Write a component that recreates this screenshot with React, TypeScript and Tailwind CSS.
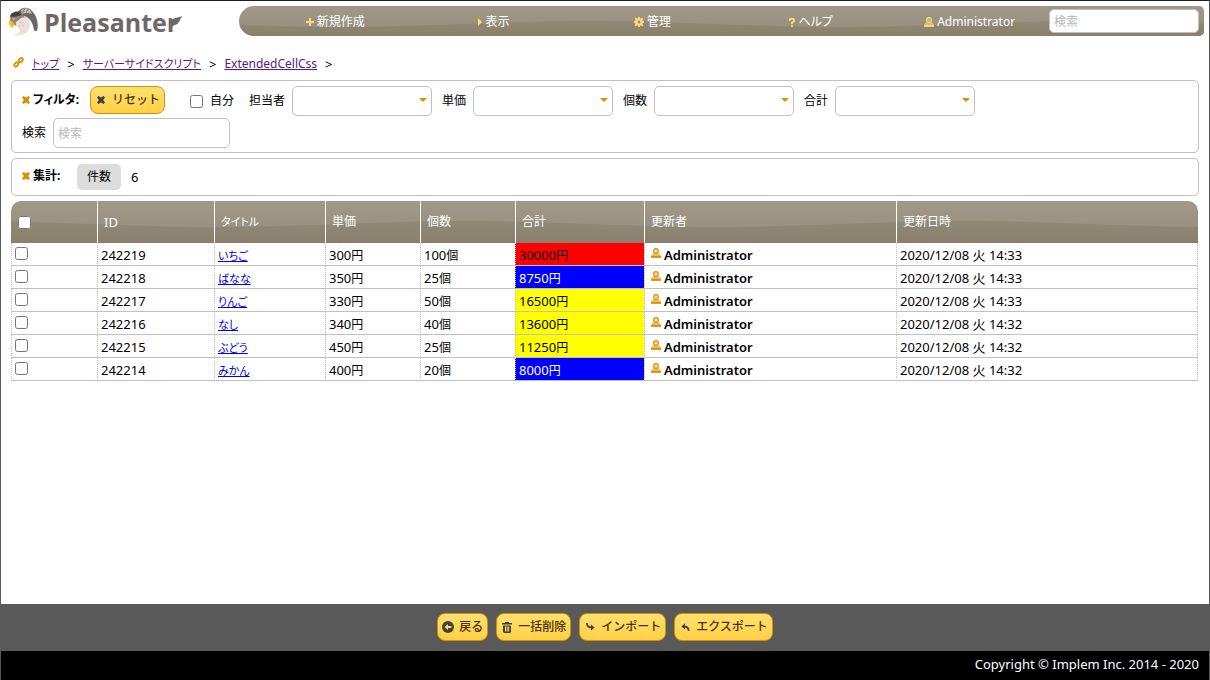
import React from 'react';

type IconProps = { className?: string };

const navItems = [
  { label: '新規作成', icon: 'plus' },
  { label: '表示', icon: 'caret' },
  { label: '管理', icon: 'gear' },
  { label: 'ヘルプ', icon: 'help' },
  { label: 'Administrator', icon: 'person' },
];

const columns = [
  { label: 'ID', css: 'w-[117px]' },
  { label: 'タイトル', css: 'w-[111px] text-[11px]' },
  { label: '単価', css: 'w-[95px] text-[12px]' },
  { label: '個数', css: 'w-[95px] text-[12px]' },
  { label: '合計', css: 'w-[129px] text-[12px]' },
  { label: '更新者', css: 'w-[252px] text-[12px]' },
  { label: '更新日時', css: 'w-[302px] text-[12px]' },
];

const rows = [
  { id: '242219', title: 'いちご', price: '300', count: '100', total: '30000', css: 'bg-[#ff0000]', time: '14:33' },
  { id: '242218', title: 'ばなな', price: '350', count: '25', total: '8750', css: 'bg-[#0000ff] text-white', time: '14:33' },
  { id: '242217', title: 'りんご', price: '330', count: '50', total: '16500', css: 'bg-[#ffff00]', time: '14:33' },
  { id: '242216', title: 'なし', price: '340', count: '40', total: '13600', css: 'bg-[#ffff00]', time: '14:32' },
  { id: '242215', title: 'ぶどう', price: '450', count: '25', total: '11250', css: 'bg-[#ffff00]', time: '14:32' },
  { id: '242214', title: 'みかん', price: '400', count: '20', total: '8000', css: 'bg-[#0000ff] text-white', time: '14:32' },
];

const PersonIcon: React.FC<IconProps> = ({ className }) => (
  <svg viewBox="0 0 10 10" className={className} width="10" height="10" fill="currentColor" aria-hidden="true">
    <circle cx="5" cy="3" r="2.4" fillOpacity="0.35" stroke="currentColor" strokeWidth="1.1" />
    <path d="M2.4 5.2 L7.6 5.2 L9.4 6.6 L10 9.6 L0 9.6 L0.6 6.6 Z" fillOpacity="0.6" />
    <rect x="0" y="8" width="10" height="1.8" />
  </svg>
);

const CloseIcon: React.FC<IconProps> = ({ className }) => (
  <svg viewBox="0 0 8 8" className={className} width="8" height="8" fill="currentColor" aria-hidden="true">
    <path d="M0 1.5 L1.5 0 L4 1.6 L6.5 0 L8 1.5 L6.2 4 L8 6.5 L6.5 8 L4 6.4 L1.5 8 L0 6.5 L1.8 4 Z" />
  </svg>
);

const MenuIcon: React.FC<{ name: string }> = ({ name }) => {
  if (name === 'person') return <PersonIcon />;
  if (name === 'plus') {
    return (
      <svg viewBox="0 0 8 8" width="8" height="8" fill="currentColor" aria-hidden="true">
        <path d="M3 0h2v3h3v2H5v3H3V5H0V3h3z" />
      </svg>
    );
  }
  if (name === 'caret') {
    return (
      <svg viewBox="0 0 4 8" width="4" height="8" fill="currentColor" aria-hidden="true">
        <path d="M0 0l4 4-4 4z" />
      </svg>
    );
  }
  if (name === 'gear') {
    return (
      <svg viewBox="0 0 10 10" width="10" height="10" fill="none" stroke="currentColor" aria-hidden="true">
        <circle cx="5" cy="5" r="2.6" strokeWidth="2.4" />
        <path d="M5 0v2M5 8v2M0 5h2M8 5h2M1.2 1.2l1.6 1.6M7.2 7.2l1.6 1.6M8.8 1.2L7.2 2.8M2.8 7.2L1.2 8.8" strokeWidth="1.8" />
      </svg>
    );
  }
  return (
    <svg viewBox="0 0 6 9" width="6" height="9" fill="none" stroke="currentColor" strokeWidth="1.8" aria-hidden="true">
      <path d="M0.5 2.8V1.6L1.4 0.9H4.2L5 1.7V3.2L3 4.6V6.2M3 7.2V9" />
    </svg>
  );
};

const Wave: React.FC<{ id: string; height: number; shift: number; level: number }> = ({ id, height, shift, level }) => {
  const top = level - 3;
  const bottom = level + 3;
  return (
    <svg className="absolute inset-0 -z-10 h-full w-full" aria-hidden="true">
      <defs>
        <linearGradient id={`${id}-light`} x1="0" y1="0" x2="0" y2="1">
          <stop offset="0" stopColor="#a19889" />
          <stop offset="1" stopColor="#958c7b" />
        </linearGradient>
        <linearGradient id={`${id}-dark`} x1="0" y1="0" x2="0" y2="1">
          <stop offset="0" stopColor="#918875" />
          <stop offset="1" stopColor="#8a7f6d" />
        </linearGradient>
        <pattern id={`${id}-tile`} x={shift} width="500" height={height} patternUnits="userSpaceOnUse">
          <path
            d={`M0 ${bottom} C90 ${bottom} 160 ${top} 250 ${top} S410 ${bottom} 500 ${bottom} V${height} H0 Z`}
            fill={`url(#${id}-dark)`}
          />
        </pattern>
      </defs>
      <rect width="100%" height="100%" fill={`url(#${id}-light)`} />
      <rect width="100%" height="100%" fill={`url(#${id}-tile)`} />
    </svg>
  );
};

const Logo: React.FC = () => (
  <a href="#" className="flex h-8 w-[178px] items-center text-[#6f6668]" aria-label="Pleasanter">
    <svg viewBox="0 0 30 30" width="30" height="30" aria-hidden="true">
      <path d="M10 5 C13 0 20 -1 24 4 C29 9 31 17 29 24 C28 24 27 24 26 23 C25 16 22 10 15 9 L10 9 Z" fill="#6f6668" />
      <path d="M13 3.5 C15 1 19 0.5 22 3 L24 7 C21 5.5 17 5.5 14 7 Z" fill="#c5bbb7" />
      <path d="M15 6 C14.5 4 15.5 2.8 17 2.4 M18.5 5.6 C18 4 19 3 20.5 2.8" fill="none" stroke="#5b5254" strokeWidth="0.8" />
      <path d="M2 9 C3 5.5 7 4 11 4.5 L13 8 L9 10 L2.5 10.5 Z" fill="#454043" />
      <path d="M2.5 10 L9 9.5 L15 8 L17 11 L10 15 L8 19 L2 14 Z" fill="#8b8281" />
      <path d="M8 15 L14 10.5 C19 10 23 13 22 19 C21 26 14 30.5 3 27.5 C9 28 13 26 11.5 22.5 C10 20 7 19 8 15 Z" fill="#ecdfd8" />
      <path d="M12 15 l1.2 1 M14.5 18 l1.2 1 M11 19 l1 0.8" stroke="#a99c97" strokeWidth="0.8" />
      <path d="M1 14 L5 14.5 L6 17.5 L5 21 C2.5 19.5 0 17 1 14 Z" fill="#f3c300" />
      <circle cx="6" cy="12" r="1.1" fill="#f3c300" />
    </svg>
    <span className="relative ml-[6px] font-['Open_Sans',sans-serif] text-[25px] font-bold leading-8">
      Pleasanter
      <svg viewBox="0 0 12 12" width="12" height="12" className="absolute -right-1 top-[10px]" fill="currentColor" aria-hidden="true">
        <path d="M0 5 C3 2 7 2 12 0 C11.5 2 10.5 3 9.5 3.6 L10.6 3.8 C9.8 5.4 8.8 6 7.8 6.4 L8.8 6.8 C7 9 4 8.6 2.6 10.4 L1 12 Z" />
      </svg>
    </span>
  </a>
);

const Breadcrumb: React.FC = () => (
  <nav className="flex h-5 items-center gap-2 px-3" aria-label="breadcrumb">
    <svg viewBox="0 0 12 12" width="11" height="11" className="mb-1" fill="none" stroke="#d49200" strokeWidth="2" aria-hidden="true">
      <ellipse cx="8.4" cy="3.4" rx="2.6" ry="1.8" transform="rotate(-45 8.4 3.4)" />
      <ellipse cx="3.6" cy="8.2" rx="2.6" ry="1.8" transform="rotate(-45 3.6 8.2)" />
    </svg>
    <a href="#" className="text-[11px] text-[#551a8b] underline">トップ</a>
    <span>&gt;</span>
    <a href="#" className="text-[11px] text-[#551a8b] underline">サーバーサイドスクリプト</a>
    <span>&gt;</span>
    <a href="#" className="text-[12px] text-[#551a8b] underline">ExtendedCellCss</a>
    <span>&gt;</span>
  </nav>
);

const FilterSelect: React.FC<{ id: string; label: string }> = ({ id, label }) => (
  <div className="flex items-center gap-[7px]">
    <label htmlFor={id} className="text-[12px]">{label}</label>
    <div className="relative">
      <select id={id} className="block h-[30px] w-[140px] appearance-none rounded-[5px] border border-[#c0c0c0] bg-white px-1">
        <option value=""></option>
      </select>
      <svg viewBox="0 0 8 4" width="8" height="4" className="pointer-events-none absolute right-[5px] top-3" fill="#d49200" aria-hidden="true">
        <path d="M0 0h8L4 4z" />
      </svg>
    </div>
  </div>
);

const CommandButton: React.FC<{ label: string; children: React.ReactNode }> = ({ label, children }) => (
  <button
    type="button"
    className="flex h-7 items-center gap-[5px] rounded-lg border border-[#d49200] bg-linear-to-b from-[#ffdf70] via-[#ffd95c] to-[#ffd040] px-1 text-[12px] font-medium text-[#4c3000] [font-feature-settings:normal]"
  >
    <span className="flex w-3 justify-center">{children}</span>
    {label}
  </button>
);

const App: React.FC = () => {
  return (
    <div className="flex min-h-screen flex-col border-x border-t border-x-[#5a5a5a] border-t-[#201c20] bg-white font-['Noto_Sans','Noto_Sans_CJK_JP',sans-serif] text-[13px] leading-5 text-black [font-feature-settings:'palt']">
      <header className="flex items-start justify-between gap-[53px] pl-[7px] pr-[5px] pt-[5px]">
        <Logo />
        <nav className="relative isolate flex h-[30px] flex-1 items-center overflow-hidden rounded-l-[15px] rounded-r-[5px] pl-[17px] pr-[5px] text-white">
          <Wave id="nav" height={30} shift={100} level={18} />
          <ul className="flex flex-1 pt-[2px]">
            {navItems.map((item) => (
              <li key={item.label} className="flex-1">
                <a href="#" className="flex items-center justify-center gap-[3px] text-[12px] text-[#ffdb70]">
                  <MenuIcon name={item.icon} />
                  <span className="text-white">{item.label}</span>
                </a>
              </li>
            ))}
          </ul>
          <input
            type="text"
            aria-label="検索"
            placeholder="検索"
            className="h-6 w-[150px] rounded-[5px] border border-[#c0c0c0] bg-white px-1 text-[12px] text-black placeholder:text-[#b8b8b8]"
          />
        </nav>
      </header>

      <main className="flex-1">
        <div className="pb-[6px] pt-4">
          <Breadcrumb />
        </div>
        <div className="flex flex-col gap-[5px] px-[10px]">
          <section className="rounded-[5px] border border-[#c0c0c0] px-[10px] pb-1 pt-[5px]">
            <div className="flex flex-wrap items-center gap-x-[10px]">
              <div className="flex h-7 w-[58px] items-center gap-[3px] self-start text-[12px] font-bold">
                <CloseIcon className="text-[#d49200]" />
                フィルタ:
              </div>
              <div className="self-start">
                <CommandButton label="リセット">
                  <CloseIcon className="text-[#404040]" />
                </CommandButton>
              </div>
              <label className="ml-[15px] mr-[5px] flex items-center gap-[7px] text-[12px]">
                <input type="checkbox" className="size-[13px]" />
                自分
              </label>
              <FilterSelect id="owner" label="担当者" />
              <FilterSelect id="price" label="単価" />
              <FilterSelect id="count" label="個数" />
              <FilterSelect id="total" label="合計" />
            </div>
            <div className="mt-[2px] flex items-center gap-[7px]">
              <label htmlFor="search" className="text-[12px]">検索</label>
              <input
                id="search"
                type="text"
                placeholder="検索"
                className="h-[30px] w-[177px] rounded-[5px] border border-[#c0c0c0] px-1 text-[12px] placeholder:text-[#b8b8b8]"
              />
            </div>
          </section>

          <section className="flex items-center rounded-[5px] border border-[#c0c0c0] px-[10px] py-[5px]">
            <div className="flex w-[55px] items-center gap-[3px] pb-[2px] text-[12px] font-bold">
              <CloseIcon className="text-[#d49200]" />
              集計:
            </div>
            <span className="flex h-[26px] items-center rounded-[5px] bg-[#dcdcdc] px-[10px] text-[12px]">件数</span>
            <span className="ml-[10px]">6</span>
          </section>

          <div className="relative isolate mr-px">
            <div className="absolute inset-x-0 top-0 -z-10 h-[42px] overflow-hidden rounded-t-[10px]">
              <Wave id="grid" height={42} shift={204} level={23} />
            </div>
            <table className="w-full table-fixed border-separate border-spacing-0">
              <thead>
                <tr className="h-[42px] text-left text-white">
                  <th className="w-[86px] px-[7px] font-normal">
                    <input type="checkbox" aria-label="すべて選択" className="block size-[13px]" />
                  </th>
                  {columns.map((column) => (
                    <th key={column.label} className={`${column.css} border-l border-white px-[6px] font-normal`}>
                      {column.label}
                    </th>
                  ))}
                </tr>
              </thead>
              <tbody className="leading-[18px] [&_td]:h-[23px] [&_td]:border-b [&_td]:border-l [&_td]:border-[#c0c0c0] [&_td]:px-[3px] [&_td]:pt-[2px] [&_td]:[border-left-style:dotted] [&_td:last-child]:border-r [&_td:last-child]:[border-right-style:dotted]">
                {rows.map((row) => (
                  <tr key={row.id}>
                    <td>
                      <input type="checkbox" aria-label={row.id} className="mb-1 block size-[13px]" />
                    </td>
                    <td>{row.id}</td>
                    <td>
                      <a href="#" className="text-[11px] text-[#0000ee] underline">{row.title}</a>
                    </td>
                    <td>{row.price}<span className="text-[12px]">円</span></td>
                    <td>{row.count}<span className="text-[12px]">個</span></td>
                    <td className={row.css}>{row.total}<span className="text-[12px]">円</span></td>
                    <td>
                      <div className="flex items-center gap-[3px] pl-[3px] font-semibold">
                        <PersonIcon className="mb-1 text-[#d49200]" />
                        Administrator
                      </div>
                    </td>
                    <td>2020/12/08 火 {row.time}</td>
                  </tr>
                ))}
              </tbody>
            </table>
          </div>
        </div>
      </main>

      <div className="flex h-[47px] items-start justify-center gap-2 bg-[#595959] pt-[9px]">
        <CommandButton label="戻る">
          <svg viewBox="0 0 12 12" width="12" height="12" aria-hidden="true">
            <circle cx="6" cy="6" r="6" fill="#404040" />
            <path d="M2.5 6L6 3v2h3.5v2H6v2z" fill="#ffdb60" />
          </svg>
        </CommandButton>
        <CommandButton label="一括削除">
          <svg viewBox="0 0 10 11" width="10" height="11" fill="#404040" aria-hidden="true">
            <path d="M3 0h4v1h3v1.5H0V1h3zM1 3.5h8V10L8 11H2L1 10zM3 4.5v5h1v-5zM4.6 4.5v5h1v-5zM6.2 4.5v5h1v-5z" fillRule="evenodd" />
          </svg>
        </CommandButton>
        <CommandButton label="インポート">
          <svg viewBox="0 0 10 9" width="9" height="8" aria-hidden="true">
            <path d="M1 0C1 3.5 2.5 5 6 5" fill="none" stroke="#404040" strokeWidth="2" />
            <path d="M5.5 1.6L9.6 5.2L5.5 8.8z" fill="#404040" />
          </svg>
        </CommandButton>
        <CommandButton label="エクスポート">
          <svg viewBox="0 0 10 9" width="9" height="8" aria-hidden="true">
            <path d="M4 4C7 4 8.5 5.5 8.5 9" fill="none" stroke="#404040" strokeWidth="2" />
            <path d="M4.5 0.2L0.4 3.8L4.5 7.4z" fill="#404040" />
          </svg>
        </CommandButton>
      </div>
      <footer className="flex h-[29px] items-center justify-end bg-black px-[10px] pb-[3px] text-white">
        Copyright © Implem Inc. 2014 - 2020
      </footer>
    </div>
  );
};

export default App;
